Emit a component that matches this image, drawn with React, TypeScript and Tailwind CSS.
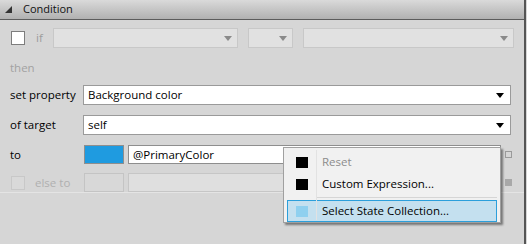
import React from "react";

const FONT = "font-['Open_Sans',sans-serif]";

function Caret({ color = "#000" }: { color?: string }) {
  return (
    <svg width="8" height="5" viewBox="0 0 8 5" className="shrink-0">
      <path d="M0 0 L8 0 L4 5 Z" fill={color} />
    </svg>
  );
}

function DisabledSelect({ className }: { className: string }) {
  return (
    <div
      className={`h-[20px] bg-[#e1e1e1] border border-[#c8c8c8] flex items-center justify-end pr-[5px] ${className}`}
    >
      <Caret color="#8a8a8a" />
    </div>
  );
}

function Select({ value }: { value: string }) {
  return (
    <div className="flex-1 h-[20px] bg-white border border-[#9a9a9a] flex items-center pl-[4px] pr-[6px]">
      <span className="flex-1 text-[11.5px] text-black leading-none">{value}</span>
      <Caret />
    </div>
  );
}

function MenuItem({
  label,
  icon,
  dim,
  active,
}: {
  label: string;
  icon: string;
  dim?: boolean;
  active?: boolean;
}) {
  return (
    <div
      className={`h-[22px] flex items-center border ${
        active ? "bg-[#c4e0ef] border-[#2c9fdb]" : "border-transparent"
      }`}
    >
      <div className="w-[27px] flex justify-center pl-[1px]">
        <div className="w-[12px] h-[11px]" style={{ background: icon }} />
      </div>
      <span
        className={`pl-[7px] text-[11.5px] leading-none ${dim ? "text-[#8c8c8c]" : "text-black"}`}
      >
        {label}
      </span>
    </div>
  );
}

export default function App() {
  return (
    <div className={`relative w-[527px] h-[244px] bg-[#d6d6d6] ${FONT}`}>
      <div className="w-[526px] h-full border-r-2 border-[#555555]">
        {/* header */}
        <div className="h-[20px] flex items-center bg-gradient-to-b from-[#dadada] to-[#b1b1b1] border-b border-[#5c5c5c]">
          <svg width="7" height="7" viewBox="0 0 7 7" className="ml-[5px]">
            <path d="M7 0 L7 7 L0 7 Z" fill="#333" />
          </svg>
          <span className="ml-[11px] text-[11px] text-[#111]">Condition</span>
        </div>

        {/* if row */}
        <div className="mt-[8px] flex items-center h-[20px]">
          <div className="ml-[11px] w-[14px] h-[14px] bg-white border border-[#7d7d7d]" />
          <span className="ml-[11px] w-[17px] text-[11.5px] text-[#9c9c9c]">if</span>
          <DisabledSelect className="w-[185px]" />
          <DisabledSelect className="ml-[10px] w-[45px]" />
          <DisabledSelect className="ml-[10px] w-[211px]" />
        </div>

        {/* then */}
        <div className="mt-[10px] h-[20px] flex items-center pl-[10px] text-[11.5px] text-[#a2a2a2]">
          then
        </div>

        {/* set property */}
        <div className="mt-[7px] flex items-center h-[20px] pr-[13px]">
          <span className="w-[83px] pl-[10px] text-[11.5px] text-black">set property</span>
          <Select value="Background color" />
        </div>

        {/* of target */}
        <div className="mt-[10px] flex items-center h-[20px] pr-[13px]">
          <span className="w-[83px] pl-[10px] text-[11.5px] text-black">of target</span>
          <Select value="self" />
        </div>

        {/* to */}
        <div className="mt-[10px] flex items-center h-[19px]">
          <span className="w-[84px] pl-[10px] text-[11.5px] text-black">to</span>
          <div className="w-[40px] h-[19px] bg-[#1f9be0] border border-[#8e8e8e]" />
          <div className="ml-[4px] w-[373px] h-[19px] bg-white border border-[#8e8e8e] flex items-center pl-[4px] text-[11.5px] text-black">
            @PrimaryColor
          </div>
          <div className="ml-[4px] w-[7px] h-[7px] border border-[#9a9a9a]" />
        </div>

        {/* else to */}
        <div className="mt-[9px] flex items-center h-[19px] border-b border-[#e4e4e4] box-content">
          <div className="ml-[11px] w-[14px] h-[14px] border border-[#c8c8c8] bg-[#d9d9d9]" />
          <span className="ml-[10px] w-[49px] text-[11.5px] text-[#b0b0b0]">else to</span>
          <div className="w-[40px] h-[19px] bg-[#d8d8d8] border border-[#c4c4c4]" />
          <div className="ml-[4px] w-[373px] h-[19px] bg-[#dfdfdf] border border-[#c6c6c6]" />
          <div className="ml-[4px] w-[7px] h-[7px] bg-[#a8a8a8]" />
        </div>
      </div>

      {/* context menu */}
      <div className="absolute left-[283px] top-[147px] w-[218px] h-[76px] bg-[#f1f1f1] border border-[#a0a0a0] shadow-[2px_2px_2px_rgba(0,0,0,0.45)] px-[3px] py-[3px]">
        <div className="absolute left-[32px] top-[2px] bottom-[2px] w-px bg-[#e2e2e2]" />
        <MenuItem label="Reset" icon="#000" dim />
        <MenuItem label="Custom Expression..." icon="#000" />
        <div className="ml-[30px] my-[2px] h-px bg-[#d6d6d6]" />
        <MenuItem label="Select State Collection..." icon="#8fd0ef" active />
      </div>
    </div>
  );
}
